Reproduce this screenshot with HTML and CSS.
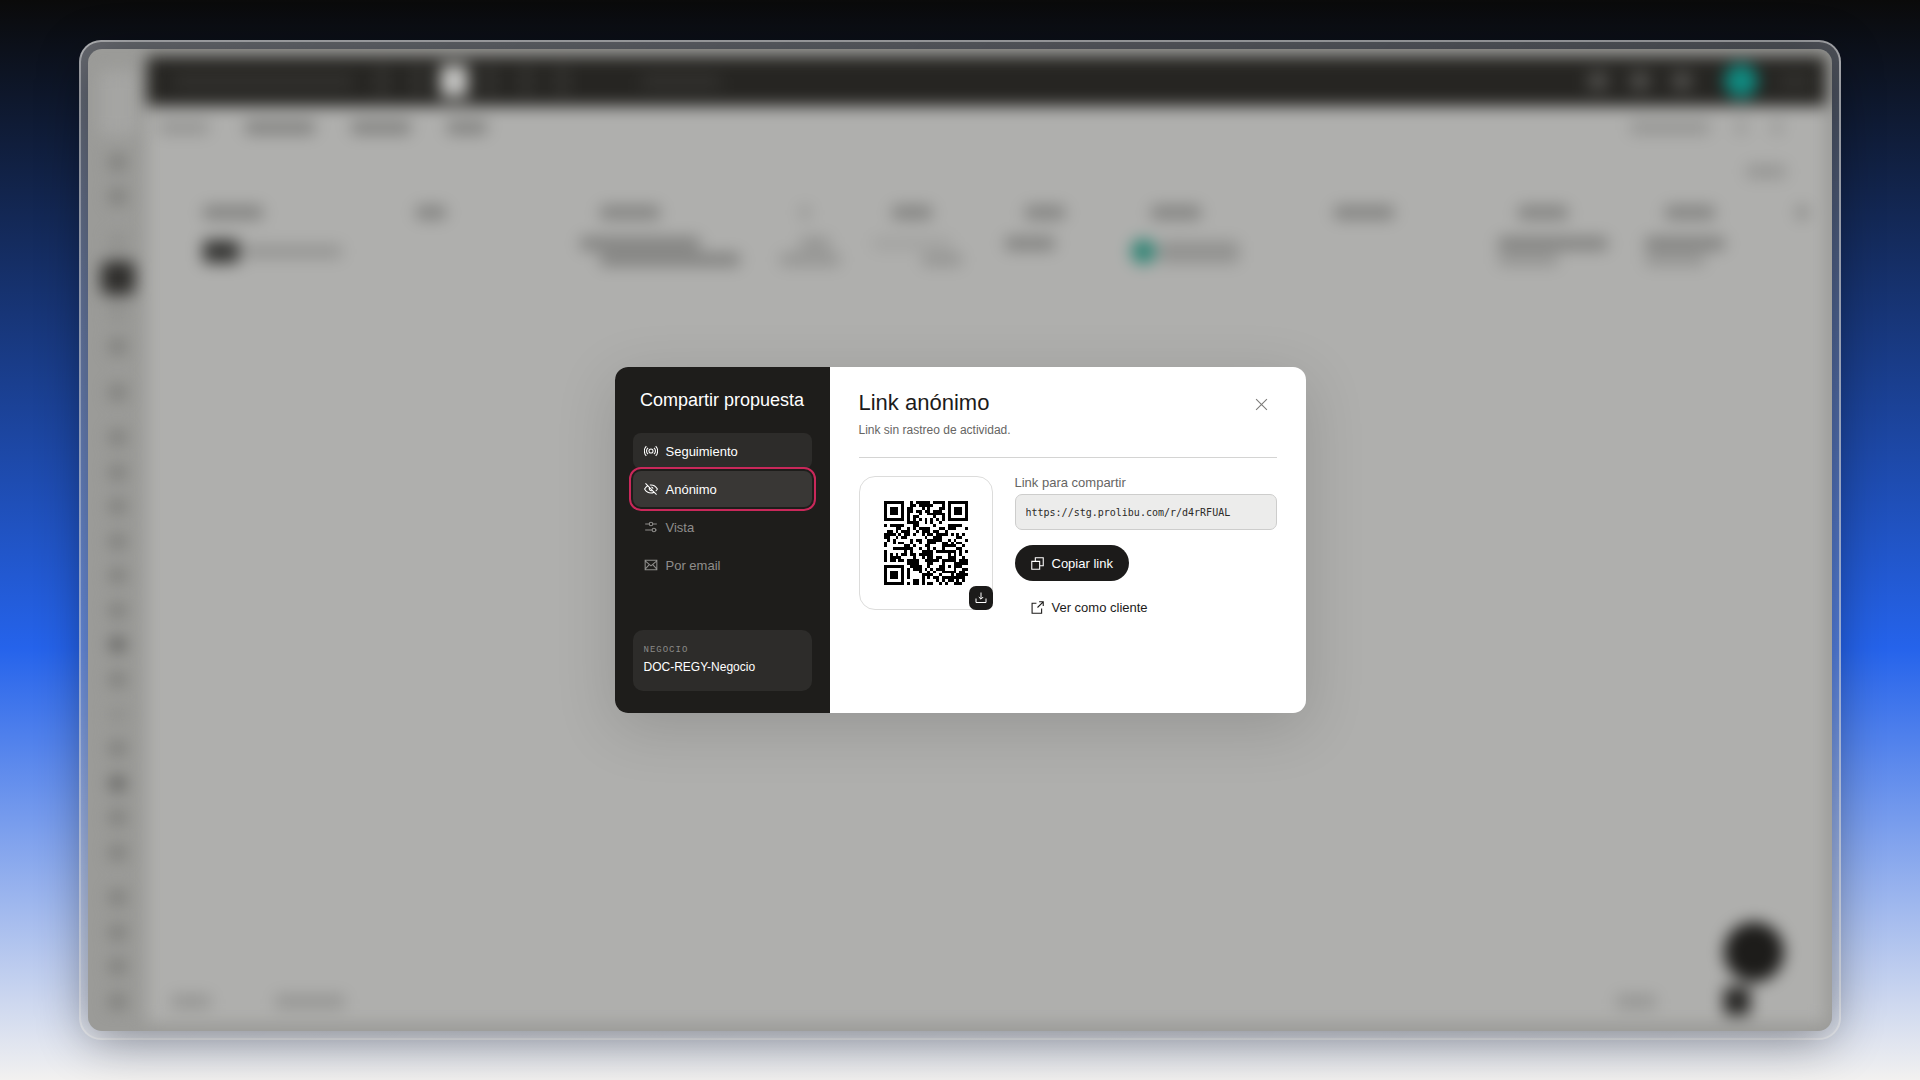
FILE: index.html
```
<!DOCTYPE html>
<html lang="es">
<head>
    <meta charset="UTF-8">
    <title>Compartir propuesta</title>
    <link rel="stylesheet" href="styles.css">
</head>
<body>
<div class="frame">
    <div class="screen">

        <!-- app behind the dialog -->
        <div class="app" aria-hidden="true">
            <div class="rail">
                <i class="logo"></i>
                <i></i><i></i><i class="gap faint"></i><i class="active"></i><i class="faint"></i><i></i>
                <i class="gap"></i><i class="gap"></i><i></i><i></i><i></i><i></i><i></i><i class="strong"></i><i></i>
                <i class="faint"></i><i></i><i class="strong"></i><i></i><i></i>
                <i class="gap"></i><i></i><i></i><i></i>
            </div>
            <div class="main">
                <div class="topbar">
                    <div class="tools">
                        <b class="w180"></b><b class="dot"></b><b class="dot"></b><b class="dot on"></b><b class="dot"></b><b class="dot"></b><b class="dot"></b><b class="w80 search"></b>
                    </div>
                    <div class="tools">
                        <b class="spot"></b><b class="spot"></b><b class="spot"></b><b class="avatar"></b><b class="w30"></b>
                    </div>
                </div>
                <div class="filters">
                    <div class="group"><i class="w50 faint"></i><i class="w70"></i><i class="w60"></i><i class="w40"></i></div>
                    <div class="group right"><i class="w80 faint"></i><i class="w10 faint"></i><i class="w10 faint"></i></div>
                </div>
                <div class="count"><i class="w40 faint"></i></div>
                <div class="grid heads">
                    <i class="w60"></i><i class="w30"></i><i class="w60"></i><i class="w10 faint"></i><i class="w40"></i><i class="w40"></i>
                    <i class="w50"></i><i class="w60"></i><i class="w50"></i><i class="w50"></i><i class="w10"></i>
                </div>
                <div class="grid row">
                    <div class="cell pair"><i class="tag"></i><i class="w100 faint"></i></div>
                    <div class="cell"></div>
                    <div class="cell shift"><i class="w120"></i><i class="w140 indent"></i></div>
                    <div class="cell shift"><i class="w30 faint indent"></i><i class="w60 faint"></i></div>
                    <div class="cell shift"><i class="w80 pale"></i><i class="w40 faint far"></i></div>
                    <div class="cell shift top"><i class="w50"></i></div>
                    <div class="cell pair shift"><i class="avatar"></i><i class="w80 tall"></i></div>
                    <div class="cell"></div>
                    <div class="cell shift"><i class="w110"></i><i class="w60 faint"></i></div>
                    <div class="cell shift"><i class="w80"></i><i class="w60 faint"></i></div>
                    <div class="cell"></div>
                </div>
                <div class="foot">
                    <div class="group"><i class="w40 faint"></i><i class="w70 faint"></i></div>
                    <div class="pager"><i class="w40 faint"></i><i class="page"></i></div>
                </div>
                <b class="fab"></b>
            </div>
        </div>

        <div class="dialog" role="dialog" aria-labelledby="dialog-title">
            <aside class="side">
                <h1>Compartir propuesta</h1>
                <nav class="menu">
                    <button type="button" class="item lit">
                        <svg viewBox="0 0 24 24"><circle cx="12" cy="12" r="3.5"/><path d="M7 17.500a7 7 0 0 1 0-11M17 6.500a7 7 0 0 1 0 11M4 20.500C-.5 16-.5 8 4 3.500M20 3.500c4.500 4.500 4.500 12.500 0 17"/></svg>
                        Seguimiento
                    </button>
                    <button type="button" class="item current">
                        <svg viewBox="0 0 24 24"><path d="M2.500 2.500l19 19M6.500 6.500C3.800 8 2 10.300 1 12c2 3.500 6 7 11 7 2 0 3.800-.6 5.300-1.400M10 5.200c.6-.1 1.300-.2 2-.2 5 0 9 3.500 11 7-.7 1.200-1.700 2.600-3 3.700M9.700 9.700a3.300 3.300 0 0 0 4.600 4.600M12.500 8.500a3.500 3.500 0 0 1 3 3"/></svg>
                        Anónimo
                    </button>
                    <button type="button" class="item">
                        <svg viewBox="0 0 24 24"><path d="M2 7h7M15 7h7M2 17h12M20 17h2"/><circle cx="12" cy="7" r="3"/><circle cx="17" cy="17" r="3"/></svg>
                        Vista
                    </button>
                    <button type="button" class="item">
                        <svg viewBox="0 0 24 24"><path d="M2 4h20v16H2zM2 5l10 8.500L22 5M2 19l7-7.500M22 19l-7-7.500"/></svg>
                        Por email
                    </button>
                </nav>
                <div class="deal">
                    <span class="deal-label">NEGOCIO</span>
                    <span class="deal-name">DOC-REGY-Negocio</span>
                </div>
            </aside>

            <section class="panel">
                <header class="panel-head">
                    <div>
                        <h2 id="dialog-title">Link anónimo</h2>
                        <p>Link sin rastreo de actividad.</p>
                    </div>
                    <button type="button" class="close" aria-label="Cerrar">
                        <svg viewBox="0 0 12 12"><path d="M1 1l10 10M11 1L1 11"/></svg>
                    </button>
                </header>
                <div class="share">
                    <div class="qr">
                        <svg id="qr" shape-rendering="crispEdges"></svg>
                        <button type="button" class="download" aria-label="Descargar QR">
                            <svg viewBox="0 0 12 12"><path d="M6 .5v6.500M3.800 5L6 7.200 8.200 5M1 6.500V10.500h10V6.500"/></svg>
                        </button>
                    </div>
                    <div class="fields">
                        <label for="link">Link para compartir</label>
                        <input id="link" type="text" value="https://stg.prolibu.com/r/d4rRFUAL" readonly>
                        <button type="button" class="copy">
                            <svg viewBox="0 0 12 12"><path d="M.7 4h7.300v7.300H.7zM4 4V.7h7.300V8H8"/></svg>
                            Copiar link
                        </button>
                        <a href="#" class="preview">
                            <svg viewBox="0 0 12 12"><path d="M5 2H1v9.300h8.800V7M7.500.7h3.800v3.800M11.300.7L6 6"/></svg>
                            Ver como cliente
                        </a>
                    </div>
                </div>
            </section>
        </div>
    </div>
</div>

<script src="qr.js"></script>
<script>
    var link = document.getElementById("link");
    drawQr(document.getElementById("qr"), link.value);
</script>
</body>
</html>
```
FILE: styles.css
```
* {
    box-sizing: border-box;
}

body, h1, h2, p {
    margin: 0;
    font-weight: normal;
}

body {
    min-height: 100vh;
    display: flex;
    padding: 40px 79px;
    font-family: "Liberation Sans", Arial, sans-serif;
    font-size: 13px;
    background: linear-gradient(180deg, #0a0a0a 0%, #2563eb 60%, #f2f1f0 100%);
}

button, input {
    font: inherit;
}

svg {
    fill: none;
    stroke: currentColor;
}

.frame {
    flex: 1;
    display: flex;
    padding: 7px;
    border: 2px solid rgba(255, 255, 255, 0.5);
    border-radius: 22px;
    background: linear-gradient(135deg, rgba(255, 255, 255, 0.38), rgba(255, 255, 255, 0.22));
}

.screen {
    flex: 1;
    display: grid;
    place-items: center;
    border-radius: 14px;
    overflow: hidden;
    background: #9b9b98;
    box-shadow: 0 8px 50px rgba(0, 0, 0, 0.45);
}

/* blurred app */
.app {
    grid-area: 1 / 1;
    align-self: stretch;
    justify-self: stretch;
    display: flex;
    padding: 7px 6px 8px 0;
    filter: blur(8px);
}

.app i, .app b {
    display: block;
    flex: none;
    height: 13px;
    border-radius: 4px;
    background: #80807e;
}

.app .faint { background: #949492; }
.app .pale { background: #a3a3a1; }
.app .w10 { width: 10px; }
.app .w30 { width: 30px; }
.app .w40 { width: 40px; }
.app .w50 { width: 50px; }
.app .w60 { width: 60px; }
.app .w70 { width: 70px; }
.app .w80 { width: 80px; }
.app .w100 { width: 100px; }
.app .w110 { width: 110px; }
.app .w120 { width: 120px; }
.app .w140 { width: 140px; }
.app .w180 { width: 180px; }

.rail {
    width: 59px;
    display: flex;
    flex-direction: column;
    align-items: center;
    justify-content: space-between;
    padding: 15px 0 14px;
}

.app .rail i {
    width: 15px;
    height: 15px;
    background: #7a7a77;
}

.app .rail .logo {
    width: 38px;
    height: 64px;
    background: #a5a5a3;
}

.app .rail .gap { margin-top: 11px; }
.app .rail .faint { background: #8e8e8b; }
.app .rail .strong { background: #60605e; }

.app .rail .active {
    width: 34px;
    height: 34px;
    margin: -8px 0 -10px;
    border-radius: 8px;
    background: #2f2e2c;
}

.main {
    flex: 1;
    position: relative;
    display: flex;
    flex-direction: column;
    background: #afafad;
}

.topbar {
    height: 50px;
    display: flex;
    align-items: center;
    justify-content: space-between;
    padding: 0 16px 0 26px;
    background: #262522;
}

.tools {
    display: flex;
    align-items: center;
    gap: 22px;
}

.app .topbar b { background: #33322f; }
.app .tools .dot { width: 14px; height: 28px; }
.app .tools .on { width: 28px; height: 32px; margin: 0 -7px; background: #c4c4c2; }
.app .tools .search { margin-left: 50px; }
.app .tools .spot { width: 20px; height: 18px; background: #4f4e4b; }

.app .avatar {
    width: 25px;
    height: 25px;
    border-radius: 50%;
    background: #2f8474;
}

.app .topbar .avatar {
    width: 34px;
    height: 34px;
    margin-left: 10px;
    background: #108a80;
}

.filters {
    display: flex;
    justify-content: space-between;
    padding: 15px 44px 0 12px;
}

.group {
    display: flex;
    gap: 36px;
}

.group.right { gap: 26px; }

.count {
    display: flex;
    justify-content: flex-end;
    padding: 31px 40px 0 0;
}

.grid {
    display: grid;
    grid-template-columns: 213px 184px 200px 92px 133px 126px 183px 184px 147px 132px 1fr;
    padding: 28px 0 0 56px;
}

.row {
    align-items: center;
    padding-top: 18px;
}

.cell {
    display: flex;
    flex-direction: column;
    gap: 3px;
}

.pair {
    flex-direction: row;
    align-items: center;
}

.shift { margin-left: -20px; }
.top { align-self: start; }
.indent { margin-left: 20px; }
.far { margin-left: 50px; }
.app .tag { width: 36px; height: 23px; background: #373735; }
.app .tall { height: 22px; background: #929290; }

.foot {
    display: flex;
    justify-content: space-between;
    align-items: center;
    margin-top: auto;
    padding: 0 76px 8px 24px;
}

.foot .group { gap: 64px; }

.pager {
    display: flex;
    align-items: center;
    gap: 68px;
}

.app .page {
    width: 26px;
    height: 28px;
    background: #242321;
}

.app .fab {
    position: absolute;
    right: 42px;
    bottom: 41px;
    width: 60px;
    height: 60px;
    border-radius: 50%;
    background: #1d1c1a;
}

/* dialog */
.dialog {
    grid-area: 1 / 1;
    z-index: 1;
    display: flex;
    width: 691px;
    max-width: 100%;
    min-height: 346px;
    border-radius: 13px;
    overflow: hidden;
    background: #fff;
    box-shadow: 0 14px 60px rgba(0, 0, 0, 0.15);
}

.side {
    width: 215px;
    display: flex;
    flex-direction: column;
    padding: 22px 18px;
    background: #1e1d1b;
    color: #fff;
}

.side h1 {
    font-size: 18px;
    line-height: 22px;
    text-align: center;
}

.menu {
    display: flex;
    flex-direction: column;
    gap: 2px;
    margin-top: 22px;
}

.item {
    display: flex;
    align-items: center;
    gap: 8px;
    height: 36px;
    padding: 0 11px;
    border: 0;
    border-radius: 8px;
    background: none;
    color: #8f8e8c;
    cursor: pointer;
}

.item svg {
    width: 14px;
    height: 14px;
    stroke-width: 1.8;
}

.item.lit {
    background: #2d2c2a;
    color: #fff;
}

.item.current {
    background: #393735;
    color: #fff;
    outline: 2px solid #c9285a;
    outline-offset: 2px;
}

.deal {
    display: flex;
    flex-direction: column;
    gap: 2px;
    margin-top: auto;
    padding: 13px 11px 16px;
    border-radius: 10px;
    background: #2d2c2a;
}

.deal-label {
    font: 9px/14px "Liberation Mono", monospace;
    letter-spacing: 1px;
    color: #8b8a88;
}

.deal-name {
    font-size: 12px;
    line-height: 16px;
}

.panel {
    flex: 1;
    padding: 22px 29px;
    color: #1c1b1a;
}

.panel-head {
    display: flex;
    justify-content: space-between;
    align-items: flex-start;
    padding-bottom: 18px;
    border-bottom: 1px solid #d4d4d3;
}

.panel-head h2 {
    font-size: 22px;
    line-height: 28px;
}

.panel-head p {
    margin-top: 4px;
    font-size: 12px;
    line-height: 18px;
    color: #666563;
}

.close {
    width: 30px;
    height: 28px;
    padding: 0;
    border: 0;
    background: none;
    color: #7d7c7a;
}

.close svg {
    width: 13px;
    height: 13px;
    vertical-align: middle;
}

.share {
    display: flex;
    align-items: flex-start;
    gap: 22px;
    padding-top: 18px;
}

.qr {
    position: relative;
    width: 134px;
    height: 134px;
    display: grid;
    place-items: center;
    border: 1px solid #dcdcdb;
    border-radius: 16px;
}

#qr {
    width: 84px;
    height: 84px;
    fill: #000;
    stroke: none;
}

.download {
    position: absolute;
    right: -1px;
    bottom: -1px;
    width: 24px;
    height: 24px;
    display: grid;
    place-items: center;
    padding: 0;
    border: 0;
    border-radius: 7px;
    background: #1c1b1a;
    color: #fff;
}

.download svg {
    width: 12px;
    height: 12px;
}

.fields {
    flex: 1;
    display: flex;
    flex-direction: column;
    align-items: flex-start;
}

.fields label {
    margin-bottom: 4px;
    line-height: 14px;
    color: #666563;
}

.fields input {
    width: 100%;
    height: 36px;
    padding: 0 10px;
    border: 1px solid #cdcdcc;
    border-radius: 7px;
    background: #ececeb;
    color: #2b2a28;
    font: 10px "DejaVu Sans Mono", monospace;
}

.copy, .preview {
    display: flex;
    align-items: center;
    gap: 8px;
    height: 36px;
    padding: 0 16px;
    border: 0;
    border-radius: 18px;
}

.copy {
    margin-top: 15px;
    background: #1c1b1a;
    color: #fff;
}

.preview {
    margin-top: 8px;
    color: #1c1b1a;
    text-decoration: none;
}

.copy svg, .preview svg {
    width: 13px;
    height: 13px;
}
```
FILE: qr.js
```
// QR version 3, byte mode, level M, mask 2 (29 x 29 modules)
var SIZE = 29;
var DATA_WORDS = 44;
var ECC_WORDS = 26;
var FORMAT = 0x5e7c;

function gfMul(x, y) {
    var z = 0;
    for (var i = 7; i >= 0; i--) {
        z = (z << 1) ^ ((z >>> 7) * 0x11d);
        z ^= ((y >>> i) & 1) * x;
    }
    return z;
}

function eccFor(data) {
    var div = [], root = 1, i, j;
    for (i = 0; i < ECC_WORDS; i++) div.push(0);
    div[ECC_WORDS - 1] = 1;
    for (i = 0; i < ECC_WORDS; i++) {
        for (j = 0; j < ECC_WORDS; j++) {
            div[j] = gfMul(div[j], root);
            if (j + 1 < ECC_WORDS) div[j] ^= div[j + 1];
        }
        root = gfMul(root, 2);
    }
    var rem = div.map(function () { return 0; });
    data.forEach(function (b) {
        var f = b ^ rem.shift();
        rem.push(0);
        div.forEach(function (d, k) { rem[k] ^= gfMul(d, f); });
    });
    return rem;
}

function encode(text) {
    var bits = "";
    function put(v, n) {
        bits += v.toString(2).padStart(n, "0");
    }
    put(4, 4);
    put(text.length, 8);
    for (var i = 0; i < text.length; i++) put(text.charCodeAt(i), 8);
    bits += "0000";
    var data = bits.match(/.{8}/g).map(function (b) { return parseInt(b, 2); });
    for (var pad = 0xec; data.length < DATA_WORDS; pad ^= 0xec ^ 0x11) data.push(pad);
    return data.concat(eccFor(data));
}

function build(words) {
    var m = [], used = [], x, y, i, j;
    for (y = 0; y < SIZE; y++) {
        m.push(new Array(SIZE).fill(0));
        used.push(new Array(SIZE).fill(false));
    }
    function set(x, y, v) {
        m[y][x] = v ? 1 : 0;
        used[y][x] = true;
    }

    // timing, finders, alignment
    for (i = 0; i < SIZE; i++) {
        set(6, i, i % 2 === 0);
        set(i, 6, i % 2 === 0);
    }
    [[3, 3], [SIZE - 4, 3], [3, SIZE - 4]].forEach(function (c) {
        for (var dy = -4; dy <= 4; dy++) {
            for (var dx = -4; dx <= 4; dx++) {
                var d = Math.max(Math.abs(dx), Math.abs(dy));
                var px = c[0] + dx, py = c[1] + dy;
                if (px >= 0 && px < SIZE && py >= 0 && py < SIZE) set(px, py, d !== 2 && d !== 4);
            }
        }
    });
    for (i = -2; i <= 2; i++) {
        for (j = -2; j <= 2; j++) {
            set(22 + j, 22 + i, Math.max(Math.abs(i), Math.abs(j)) !== 1);
        }
    }

    // format bits
    function bit(n) { return (FORMAT >>> n) & 1; }
    for (i = 0; i <= 5; i++) set(8, i, bit(i));
    set(8, 7, bit(6));
    set(8, 8, bit(7));
    set(7, 8, bit(8));
    for (i = 9; i < 15; i++) set(14 - i, 8, bit(i));
    for (i = 0; i < 8; i++) set(SIZE - 1 - i, 8, bit(i));
    for (i = 8; i < 15; i++) set(8, SIZE - 15 + i, bit(i));
    set(8, SIZE - 8, 1);

    // data, in two-column zigzag
    var n = 0;
    for (var right = SIZE - 1; right >= 1; right -= 2) {
        if (right === 6) right = 5;
        for (var v = 0; v < SIZE; v++) {
            for (j = 0; j < 2; j++) {
                x = right - j;
                y = ((right + 1) & 2) === 0 ? SIZE - 1 - v : v;
                if (used[y][x]) continue;
                var b = n < words.length * 8 ? (words[n >>> 3] >>> (7 - (n & 7))) & 1 : 0;
                m[y][x] = x % 3 === 0 ? b ^ 1 : b;
                n++;
            }
        }
    }
    return m;
}

function drawQr(svg, text) {
    var d = "";
    build(encode(text)).forEach(function (row, y) {
        row.forEach(function (on, x) {
            if (on) d += "M" + x + " " + y + "h1v1h-1z";
        });
    });
    svg.setAttribute("viewBox", "0 0 " + SIZE + " " + SIZE);
    svg.innerHTML = '<path d="' + d + '"/>';
}
```
